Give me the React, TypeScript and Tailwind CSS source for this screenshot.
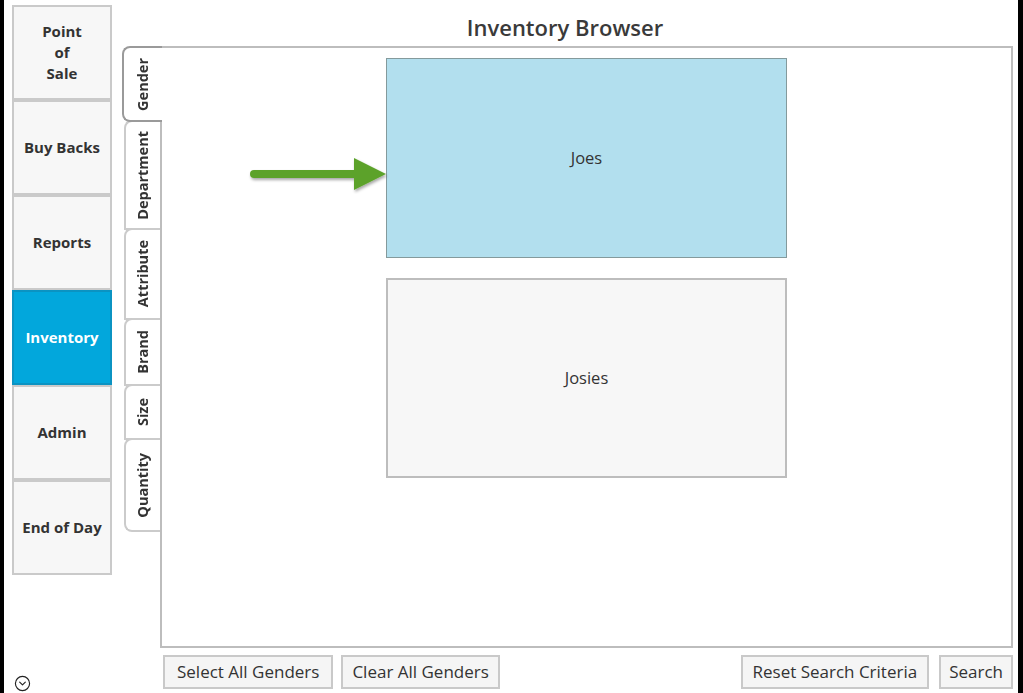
import { CircleChevronDown } from 'lucide-react';

const navItems = [
  { label: 'Point\nof\nSale', active: false },
  { label: 'Buy Backs', active: false },
  { label: 'Reports', active: false },
  { label: 'Inventory', active: true },
  { label: 'Admin', active: false },
  { label: 'End of Day', active: false },
];

const tabs = [
  { label: 'Gender', h: 'h-[76px]' },
  { label: 'Department', h: 'h-[110px]' },
  { label: 'Attribute', h: 'h-[92px]' },
  { label: 'Brand', h: 'h-[68px]' },
  { label: 'Size', h: 'h-[56px]' },
  { label: 'Quantity', h: 'h-[94px]' },
];

function App() {
  return (
    <div className="w-[1023px] h-[693px] flex bg-white text-[#333] overflow-hidden font-['Open_Sans',sans-serif]">
      {/* left frame */}
      <div className="w-[4px] bg-black shrink-0" />

      {/* Sidebar */}
      <aside className="w-[118px] shrink-0 flex flex-col pl-[8px] pt-[5px]">
        {navItems.map((item) => (
          <div
            key={item.label}
            className={`w-[100px] h-[95px] flex items-center justify-center text-center whitespace-pre-line text-[15px] leading-[21px] font-bold border-2 ${
              item.active
                ? 'bg-[#02a7dc] border-[#0b93c2] text-white'
                : 'bg-[#f7f7f7] border-[#cacaca] text-[#333]'
            }`}
          >
            {item.label}
          </div>
        ))}
        <div className="flex-1" />
        <CircleChevronDown className="w-[17px] h-[17px] ml-[2px] mb-[1px] text-[#222]" strokeWidth={1.6} />
      </aside>

      {/* Main */}
      <main className="flex-1 flex flex-col">
        <h1 className="h-[46px] flex items-center justify-center pr-[10px] pt-[8px] text-[22px] font-semibold text-[#3a3a3a]">
          Inventory Browser
        </h1>

        <div className="flex h-[602px]">
          {/* Tabs */}
          <div className="w-[38px] shrink-0 flex flex-col">
            {tabs.map((tab, i) => (
              <div
                key={tab.label}
                className={`${tab.h} flex items-center justify-center ${
                  i === 0
                    ? 'w-[40px] bg-white border-2 border-r-0 border-[#9a9a9a] rounded-l-[8px] relative z-10'
                    : `w-[36px] ml-[2px] bg-white border-2 border-r-0 border-[#cbcbcb] rounded-tl-[8px] -mt-[2px] ${
                        i === tabs.length - 1 ? 'rounded-bl-[8px]' : ''
                      }`
                }`}
              >
                <span className="[writing-mode:vertical-rl] rotate-180 text-[14.5px] font-bold text-[#333] leading-none">
                  {tab.label}
                </span>
              </div>
            ))}
          </div>

          {/* Panel */}
          <div className="relative flex-1 mr-[5px] border-2 border-[#bdbdbd] flex flex-col items-center pt-[10px] gap-[20px]">
            <div className="w-[401px] h-[200px] bg-[#b2dfee] border border-[#849a9c] flex items-center justify-center text-[16.5px] text-[#333]">
              Joes
            </div>
            <div className="w-[401px] h-[200px] bg-[#f7f7f7] border-2 border-[#bdbdbd] flex items-center justify-center text-[16.5px] text-[#333]">
              Josies
            </div>

            {/* annotation arrow */}
            <svg
              className="absolute left-[84px] top-[106px]"
              width="144"
              height="40"
              viewBox="0 0 144 40"
            >
              <defs>
                <filter id="sh" x="-10%" y="-30%" width="120%" height="160%">
                  <feDropShadow dx="1" dy="2" stdDeviation="1.5" floodColor="#000" floodOpacity="0.35" />
                </filter>
              </defs>
              <g filter="url(#sh)" fill="#5ba22b">
                <rect x="4" y="16" width="110" height="8" rx="4" />
                <polygon points="108,4 140,20 108,36" />
              </g>
            </svg>
          </div>
        </div>

        {/* Bottom buttons */}
        <div className="flex items-center h-[45px] pl-[41px] pr-[5px] pt-[2px]">
          <button className="h-[34px] px-[12px] bg-[#f5f5f5] border-2 border-[#c9c9c9] text-[17px] text-[#333]">
            Select All Genders
          </button>
          <button className="h-[34px] px-[9px] ml-[8px] bg-[#f5f5f5] border-2 border-[#c9c9c9] text-[17px] text-[#333]">
            Clear All Genders
          </button>
          <div className="flex-1" />
          <button className="h-[34px] px-[10px] bg-[#f5f5f5] border-2 border-[#c9c9c9] text-[17px] text-[#333]">
            Reset Search Criteria
          </button>
          <button className="h-[34px] px-[8px] ml-[10px] bg-[#f5f5f5] border-2 border-[#c9c9c9] text-[17px] text-[#333]">
            Search
          </button>
        </div>
      </main>

      {/* right frame */}
      <div className="w-[5px] bg-black shrink-0" />
    </div>
  );
}

export default App;
